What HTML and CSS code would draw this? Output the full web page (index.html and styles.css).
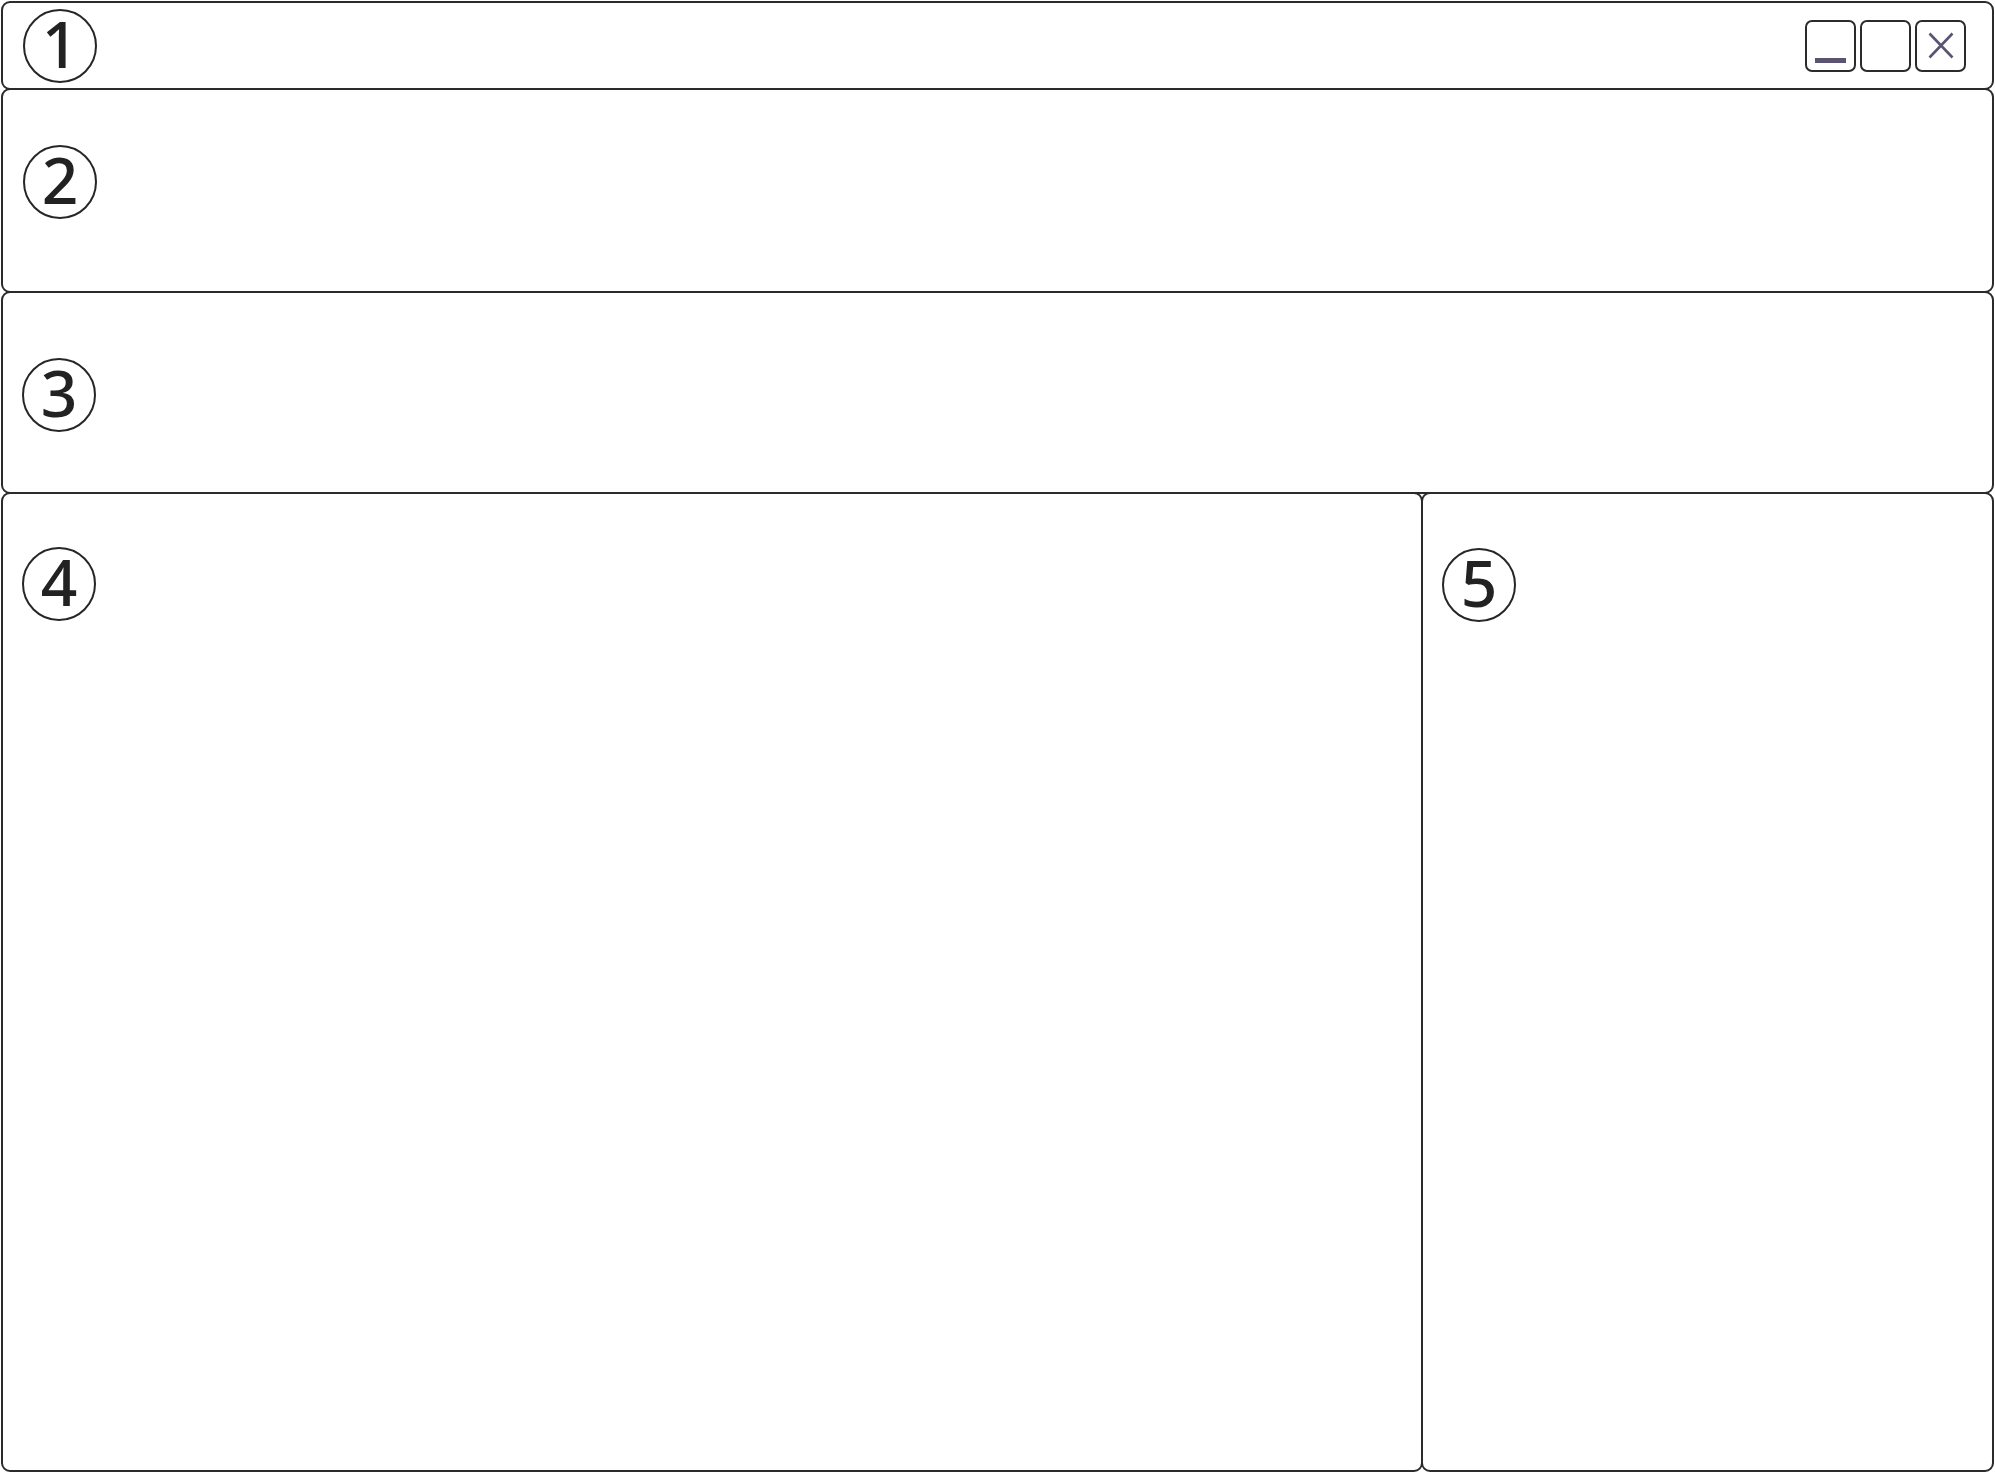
FILE: index.html
```html
<!DOCTYPE html>
<html lang="en">
<head>
  <meta charset="UTF-8">
  <title>Window layout</title>
  <link rel="stylesheet" href="styles.css">
</head>
<body>
  <div class="window">
    <div class="panel title-bar">
      <span class="num">1</span>
      <div class="win-buttons">
        <button class="win-btn minimize" aria-label="Minimize"><span class="min-line"></span></button>
        <button class="win-btn maximize" aria-label="Maximize"></button>
        <button class="win-btn close" aria-label="Close">
          <svg width="26" height="27" viewBox="0 0 26 27">
            <path d="M1.5 1.5 L24.5 25.5 M24.5 1.5 L1.5 25.5" stroke="#5b5470" stroke-width="2.6" fill="none"/>
          </svg>
        </button>
      </div>
    </div>
    <div class="panel toolbar">
      <span class="num">2</span>
    </div>
    <div class="panel ribbon">
      <span class="num">3</span>
    </div>
    <div class="content-row">
      <div class="panel main">
        <span class="num">4</span>
      </div>
      <div class="panel side">
        <span class="num">5</span>
      </div>
    </div>
  </div>
</body>
</html>
```

FILE: styles.css
```css
* { box-sizing: border-box; }
body {
  margin: 0;
  background: #fff;
  font-family: 'Noto Sans', 'Open Sans', sans-serif;
  color: #222;
}
.window {
  display: flex;
  flex-direction: column;
  width: 1995px;
  height: 1473px;
  padding: 1px;
}
.panel {
  border: 2px solid #2b2b2b;
  border-radius: 9px;
  background: #fff;
}
.num {
  display: flex;
  align-items: center;
  justify-content: center;
  width: 74px;
  height: 74px;
  border: 2px solid #262626;
  border-radius: 50%;
  font-size: 64px;
  font-weight: 500;
  line-height: 1;
  padding-bottom: 4px;
}

.title-bar {
  height: 89px;
  display: flex;
  align-items: center;
  justify-content: space-between;
  padding: 0 26px 0 20px;
}
.win-buttons {
  display: flex;
  gap: 4px;
}
.win-btn {
  width: 51px;
  height: 52px;
  padding: 0;
  border: 2px solid #2b2b2b;
  border-radius: 7px;
  background: #fff;
  display: flex;
  align-items: center;
  justify-content: center;
}
.minimize {
  align-items: flex-end;
  padding-bottom: 7px;
}
.min-line {
  width: 31px;
  height: 5px;
  background: #5b5470;
}
.close svg { display: block; }

.toolbar {
  height: 205px;
  margin-top: -2px;
  padding: 55px 20px;
}
.ribbon {
  height: 203px;
  margin-top: -2px;
  padding: 65px 19px;
}
.content-row {
  display: flex;
  flex: 1;
  margin-top: -2px;
}
.main {
  width: 1422px;
  padding: 53px 19px;
}
.side {
  flex: 1;
  margin-left: -2px;
  padding: 54px 19px;
}
```
